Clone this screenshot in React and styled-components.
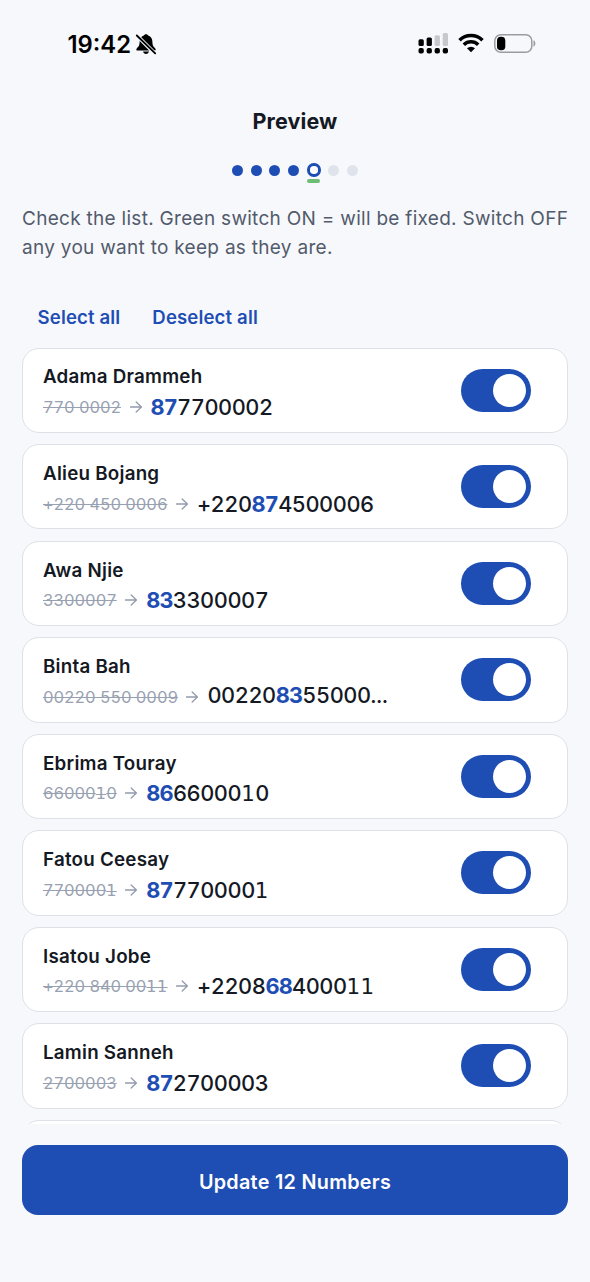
import React, { useState } from "react";
import styled, { createGlobalStyle } from "styled-components";

const GlobalStyle = createGlobalStyle`
  *, *::before, *::after { box-sizing: border-box; }
  body { margin: 0; background: #f7f8fc; }
`;

const Screen = styled.main`
  width: 590px;
  height: 1282px;
  overflow: hidden;
  display: flex;
  flex-direction: column;
  background: #f7f8fc;
  color: #141924;
  font-family: "Inter", sans-serif;
`;

const StatusBar = styled.header`
  height: 88px;
  flex: none;
  display: flex;
  justify-content: space-between;
  padding: 30px 54px 0 67.5px;
  color: #000;
`;

const ClockGroup = styled.div`
  display: flex;
  height: 28px;
  align-items: center;
  gap: 4px;
`;

const Clock = styled.span`
  width: 63.5px;
  font-size: 23.8px;
  font-weight: 580;
  line-height: 29px;
  letter-spacing: 0;
  white-space: nowrap;
`;

const StatusIcons = styled.div`
  display: flex;
  height: 28px;
  align-items: center;
`;

const WifiIcon = styled.svg`
  margin: 0 10px 2px 8px;
`;

const Title = styled.h1`
  margin: 0;
  height: 66px;
  flex: none;
  line-height: 66px;
  text-align: center;
  font-size: 21.5px;
  font-weight: 660;
  letter-spacing: 0.1px;
`;

const Steps = styled.div`
  height: 50px;
  flex: none;
  display: flex;
  justify-content: center;
  align-items: flex-start;
  padding-top: 9.4px;
  gap: 7.8px;
`;

const StepSlot = styled.div`
  display: flex;
  flex-direction: column;
  align-items: center;
  gap: 2.6px;
`;

const StepDot = styled.span`
  width: ${(p) => (p.$state === "current" ? 13.5 : 11)}px;
  height: ${(p) => (p.$state === "current" ? 13.5 : 11)}px;
  margin-top: ${(p) => (p.$state === "current" ? 0 : 1.3)}px;
  border-radius: 50%;
  border: ${(p) => (p.$state === "current" ? "3px solid #1e4eb4" : "none")};
  background: ${(p) => ({ done: "#1e4eb4", current: "#fff", todo: "#dfe4ec" })[p.$state]};
`;

const StepUnderline = styled.span`
  width: 13px;
  height: 4px;
  border-radius: 2px;
  background: #6fbd75;
`;

const Intro = styled.p`
  margin: 0;
  padding: 1px 0 0 22px;
  height: 86px;
  flex: none;
  font-size: 19px;
  line-height: 28.5px;
  letter-spacing: 0.29px;
  color: #525b6b;
  white-space: nowrap;
`;

const BulkActions = styled.div`
  height: 57px;
  flex: none;
  display: flex;
  align-items: center;
  gap: 32px;
  padding: 0 37.6px 4px;
`;

const TextButton = styled.button`
  border: 0;
  padding: 0;
  background: none;
  font: 590 18.6px/24px "Inter", sans-serif;
  letter-spacing: 0.13px;
  color: #1e4eb4;
  white-space: nowrap;
`;

const ContactList = styled.section`
  height: 777px;
  flex: none;
  overflow: hidden;
  display: flex;
  flex-direction: column;
  gap: 11.1px;
  padding: 0.5px 22px 0;
`;

const ContactCard = styled.article`
  height: 85.45px;
  flex: none;
  display: flex;
  align-items: center;
  justify-content: space-between;
  padding: 0 36px 0 20px;
  border: 1px solid #dde1e8;
  border-radius: 17px;
  background: #fff;
`;

const ContactText = styled.div`
  display: flex;
  flex-direction: column;
  padding-top: 5.5px;
`;

const ContactName = styled.h2`
  margin: 0;
  height: 28px;
  line-height: 28.6px;
  font-size: 18.8px;
  font-weight: 560;
  letter-spacing: 0.23px;
`;

const NumberRow = styled.div`
  height: 31px;
  display: flex;
  align-items: center;
  font-feature-settings: "tnum";
  white-space: nowrap;
`;

const OldNumber = styled.s`
  font-size: 16.4px;
  line-height: 32px;
  color: #98a1b1;
  letter-spacing: -0.1px;
  text-decoration-thickness: 1px;
`;

const ArrowIcon = styled.svg`
  margin: 0 9px 0 8.5px;
  flex: none;
`;

const NewNumber = styled.span`
  font-size: 21.8px;
  font-weight: 450;
  line-height: 32px;
  color: #141924;
  letter-spacing: -0.47px;
`;

const Prefix = styled.b`
  font-weight: 650;
  letter-spacing: -0.8px;
  color: #1e4eb4;
`;

const FootedOne = styled.span`
  font-family: "DejaVu Sans", sans-serif;
  font-size: 0.98em;
  line-height: 1;
  letter-spacing: 0.4px;
`;

const Ellipsis = styled.span`
  font-size: 15.5px;
  font-weight: 900;
  letter-spacing: -1px;
  font-feature-settings: normal;
`;

const Toggle = styled.button`
  width: 70px;
  height: 43px;
  flex: none;
  display: flex;
  align-items: center;
  justify-content: ${(p) => (p.$on ? "flex-end" : "flex-start")};
  padding: 0 5px;
  border: 0;
  border-radius: 22px;
  background: ${(p) => (p.$on ? "#1e4eb4" : "#dfe4ec")};
`;

const Knob = styled.span`
  width: 33px;
  height: 33px;
  border-radius: 50%;
  background: #fff;
`;

const Footer = styled.footer`
  flex: 1;
  padding: 21px 22px 0;
`;

const UpdateButton = styled.button`
  width: 100%;
  height: 70px;
  border: 0;
  border-radius: 16px;
  background: #1e4eb4;
  color: #fff;
  font: 560 19.8px/70px "Inter", sans-serif;
  letter-spacing: 0.28px;
  padding: 2px 0 0;
`;

const contacts = [
  ["Adama Drammeh", "770 0002", "", "87", "7700002"],
  ["Alieu Bojang", "+220 450 0006", "+220", "87", "4500006"],
  ["Awa Njie", "3300007", "", "83", "3300007"],
  ["Binta Bah", "00220 550 0009", "00220", "83", "55000…"],
  ["Ebrima Touray", "6600010", "", "86", "6600010"],
  ["Fatou Ceesay", "7700001", "", "87", "7700001"],
  ["Isatou Jobe", "+220 840 0011", "+2208", "68", "400011"],
  ["Lamin Sanneh", "2700003", "", "87", "2700003"],
];

const steps = ["done", "done", "done", "done", "current", "todo", "todo"];

function Digits({ value }) {
  return value.split(/([1…])/).map((part, i) => {
    if (part === "1") return <FootedOne key={i}>1</FootedOne>;
    if (part === "…") return <Ellipsis key={i}>…</Ellipsis>;
    return part;
  });
}

function BellOff() {
  return (
    <svg width="22" height="22" viewBox="0 0 22 22">
      <path d="M11 1.200c-1.100 0-1.900.6-2.200 1.400C5.900 3.500 4.600 6 4.600 9c0 4-1.600 5-2.900 6.400-.8.900-.3 2.100.9 2.100h16.800c1.200 0 1.700-1.200.9-2.100C19 14 17.400 13 17.400 9c0-3-1.300-5.500-4.200-6.400-.3-.8-1.100-1.400-2.200-1.400z" />
      <path d="M8 18.500h6c-.4 1.500-1.500 2.400-3 2.400s-2.600-.9-3-2.400z" />
      <path d="M1.500 2.200 20.500 21.200" stroke="#f7f8fc" strokeWidth="3.800" />
      <path d="M1.800 2.500 20.200 20.400" stroke="#000" strokeWidth="1.800" strokeLinecap="round" />
    </svg>
  );
}

function Signal() {
  return (
    <svg width="32" height="24" viewBox="0 0 32 24">
      <g>
        <rect x="0.500" y="7.300" width="5.300" height="6.700" rx="1.500" />
        <rect x="8.600" y="5.500" width="5.300" height="8.500" rx="1.500" />
        <rect x="16.600" y="3.300" width="5.300" height="10.700" rx="1.500" fill="#c7c8cc" />
        <rect x="24.700" y="1" width="5.300" height="13" rx="1.500" fill="#c7c8cc" />
        <rect x="0.500" y="16" width="5.300" height="5.500" rx="1.900" />
        <rect x="8.600" y="16" width="5.300" height="5.500" rx="1.900" />
        <rect x="16.600" y="16" width="5.300" height="5.500" rx="1.900" />
        <rect x="24.700" y="16" width="5.300" height="5.500" rx="1.900" />
      </g>
    </svg>
  );
}

function Wifi() {
  return (
    <WifiIcon width="26" height="20" viewBox="0 0 26 20">
      <g fill="none" stroke="#000" strokeWidth="3.500">
        <path d="M1.500 7.200a16.500 16.500 0 0 1 23 0" />
        <path d="M5.800 11.700a10.300 10.300 0 0 1 14.400 0" />
      </g>
      <path d="M13 19.200 9 15.200a5.900 5.900 0 0 1 8 0z" />
    </WifiIcon>
  );
}

function Battery() {
  return (
    <svg width="42" height="20" viewBox="0 0 42 20">
      <rect x="0.800" y="0.800" width="37" height="17.400" rx="6" fill="none" stroke="#9b9ca0" strokeWidth="1.500" />
      <rect x="3" y="2.800" width="8.300" height="13.400" rx="3.800" />
      <path d="M39.500 6.300c2.500 1 2.500 5.400 0 6.400z" fill="#9b9ca0" />
    </svg>
  );
}

function Arrow() {
  return (
    <ArrowIcon width="12" height="12" viewBox="0 0 12 12" fill="none" stroke="#929bac" strokeWidth="1.300" strokeLinecap="round" strokeLinejoin="round">
      <path d="M0.500 6h11M6.200 1 11.400 6l-5.200 5" />
    </ArrowIcon>
  );
}

function Contact({ data }) {
  const [on, setOn] = useState(true);
  const [name, before, start, prefix, rest] = data;
  return (
    <ContactCard>
      <ContactText>
        <ContactName>{name}</ContactName>
        <NumberRow>
          <OldNumber><Digits value={before} /></OldNumber>
          <Arrow />
          <NewNumber>
            {start}
            <Prefix>{prefix}</Prefix>
            <Digits value={rest} />
          </NewNumber>
        </NumberRow>
      </ContactText>
      <Toggle $on={on} role="switch" aria-checked={on} onClick={() => setOn(!on)}>
        <Knob />
      </Toggle>
    </ContactCard>
  );
}

export default function App() {
  return (
    <Screen>
      <GlobalStyle />
      <StatusBar>
        <ClockGroup>
          <Clock>19:42</Clock>
          <BellOff />
        </ClockGroup>
        <StatusIcons>
          <Signal />
          <Wifi />
          <Battery />
        </StatusIcons>
      </StatusBar>
      <Title>Preview</Title>
      <Steps>
        {steps.map((state, i) => (
          <StepSlot key={i}>
            <StepDot $state={state} />
            {state === "current" && <StepUnderline />}
          </StepSlot>
        ))}
      </Steps>
      <Intro>
        Check the list. Green switch ON = will be fixed. Switch OFF
        <br />
        any you want to keep as they are.
      </Intro>
      <BulkActions>
        <TextButton>Select all</TextButton>
        <TextButton>Deselect all</TextButton>
      </BulkActions>
      <ContactList>
        {contacts.map((c) => (
          <Contact key={c[0]} data={c} />
        ))}
        <ContactCard />
      </ContactList>
      <Footer>
        <UpdateButton>Update 12 Numbers</UpdateButton>
      </Footer>
    </Screen>
  );
}
